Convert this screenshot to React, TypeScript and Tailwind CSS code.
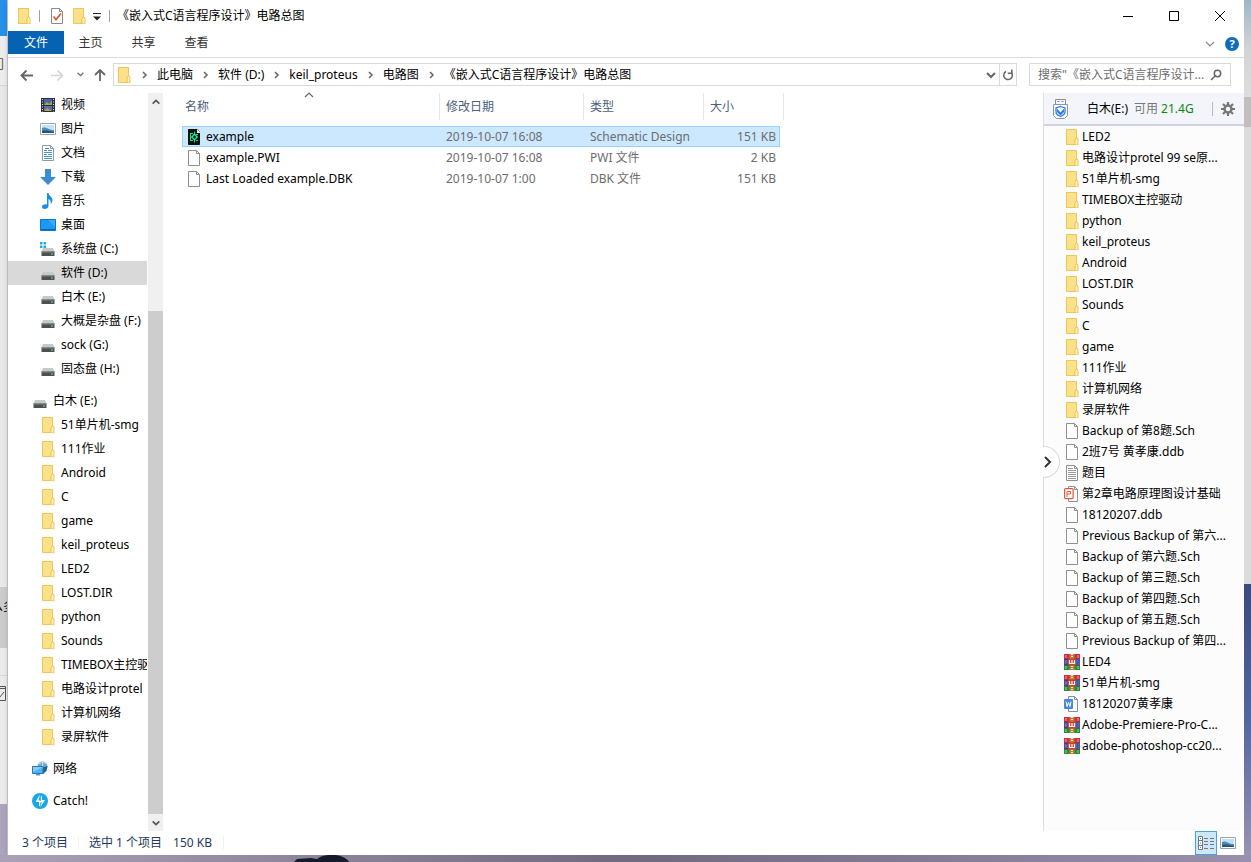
import type { ReactNode } from "react";

type IconName =
  | "folder"
  | "file"
  | "text"
  | "ppt"
  | "word"
  | "rar"
  | "schematic"
  | "video"
  | "picture"
  | "document"
  | "download"
  | "music"
  | "desktop"
  | "system"
  | "drive"
  | "network"
  | "catch";

type Item = { name: string; icon: IconName; selected?: boolean };

const quickItems: Item[] = [
  { name: "视频", icon: "video" },
  { name: "图片", icon: "picture" },
  { name: "文档", icon: "document" },
  { name: "下载", icon: "download" },
  { name: "音乐", icon: "music" },
  { name: "桌面", icon: "desktop" },
  { name: "系统盘 (C:)", icon: "system" },
  { name: "软件 (D:)", icon: "drive", selected: true },
  { name: "白木 (E:)", icon: "drive" },
  { name: "大概是杂盘 (F:)", icon: "drive" },
  { name: "sock (G:)", icon: "drive" },
  { name: "固态盘 (H:)", icon: "drive" },
];

const usbFolders = [
  "51单片机-smg",
  "111作业",
  "Android",
  "C",
  "game",
  "keil_proteus",
  "LED2",
  "LOST.DIR",
  "python",
  "Sounds",
  "TIMEBOX主控驱动",
  "电路设计protel",
  "计算机网络",
  "录屏软件",
];

const crumbs = ["此电脑", "软件 (D:)", "keil_proteus", "电路图", "《嵌入式C语言程序设计》电路总图"];

const files = [
  { name: "example", date: "2019-10-07 16:08", type: "Schematic Design", size: "151 KB", icon: "schematic" as IconName, selected: true },
  { name: "example.PWI", date: "2019-10-07 16:08", type: "PWI 文件", size: "2 KB", icon: "file" as IconName, selected: false },
  { name: "Last Loaded example.DBK", date: "2019-10-07 1:00", type: "DBK 文件", size: "151 KB", icon: "file" as IconName, selected: false },
];

const usbItems: Item[] = [
  { name: "LED2", icon: "folder" },
  { name: "电路设计protel 99 se原...", icon: "folder" },
  { name: "51单片机-smg", icon: "folder" },
  { name: "TIMEBOX主控驱动", icon: "folder" },
  { name: "python", icon: "folder" },
  { name: "keil_proteus", icon: "folder" },
  { name: "Android", icon: "folder" },
  { name: "LOST.DIR", icon: "folder" },
  { name: "Sounds", icon: "folder" },
  { name: "C", icon: "folder" },
  { name: "game", icon: "folder" },
  { name: "111作业", icon: "folder" },
  { name: "计算机网络", icon: "folder" },
  { name: "录屏软件", icon: "folder" },
  { name: "Backup of 第8题.Sch", icon: "file" },
  { name: "2班7号 黄孝康.ddb", icon: "file" },
  { name: "题目", icon: "text" },
  { name: "第2章电路原理图设计基础", icon: "ppt" },
  { name: "18120207.ddb", icon: "file" },
  { name: "Previous Backup of 第六...", icon: "file" },
  { name: "Backup of 第六题.Sch", icon: "file" },
  { name: "Backup of 第三题.Sch", icon: "file" },
  { name: "Backup of 第四题.Sch", icon: "file" },
  { name: "Backup of 第五题.Sch", icon: "file" },
  { name: "Previous Backup of 第四...", icon: "file" },
  { name: "LED4", icon: "rar" },
  { name: "51单片机-smg", icon: "rar" },
  { name: "18120207黄孝康", icon: "word" },
  { name: "Adobe-Premiere-Pro-C...", icon: "rar" },
  { name: "adobe-photoshop-cc20...", icon: "rar" },
];

const page = (
  <>
    <path d="M2.500.5h8l3 3v12h-11z" fill="#fdfdfd" stroke="#8f8f8f" />
    <path d="M10.500.5v3h3" fill="none" stroke="#8f8f8f" />
  </>
);

const driveBody = (
  <>
    <path d="M3 7h10l1.500 4h-13z" fill="#c3cac8" />
    <path d="M1.500 10.500h13V15h-13z" fill="#4b5250" />
    <path d="M1.500 10.500h13v1h-13z" fill="#7d8785" />
    <path d="M11 12.500h2v1h-2z" fill="#5ee08a" />
  </>
);

const art: Record<IconName, ReactNode> = {
  folder: (
    <>
      <path d="M2 0h11v9l1 1v6H2z" fill="#fce08a" />
      <path d="M2.500.5h10v15h-10z" fill="none" stroke="#ebc858" />
      <path d="M11 16V11l1-2h1l1 1v6z" fill="#fff0b4" stroke="#e3b93f" strokeWidth=".8" />
    </>
  ),
  file: page,
  text: (
    <>
      {page}
      <path d="M4 3.500h5M4 5.500h8M4 7.500h8M4 9.500h8M4 11.500h8M4 13.500h8" stroke="#9a9a9a" />
    </>
  ),
  ppt: (
    <>
      <path d="M4.500.5h6l3 3v12h-9z" fill="#fff" stroke="#9a8f8d" />
      <path d="M10.500.5v3h3" fill="none" stroke="#9a8f8d" />
      <rect x=".6" y="2.600" width="8.500" height="10" rx="1" fill="#fff" stroke="#e2573b" strokeWidth="1.200" />
      <path d="M3 11V5.500h3.500v2.500H3" fill="none" stroke="#e2573b" />
    </>
  ),
  word: (
    <>
      <path d="M4.500.5h6l3 3v12h-9z" fill="#fff" stroke="#7f8fae" />
      <path d="M10.500.5v3h3" fill="none" stroke="#7f8fae" />
      <rect x="0" y="3" width="9" height="10" rx="1" fill="#4a86dc" />
      <path d="M2 5.500l1 5 1.500-4 1.500 4 1-5" fill="none" stroke="#fff" />
    </>
  ),
  rar: (
    <>
      <path d="M0 0h16v5H0z" fill="#d22b50" />
      <path d="M0 5.500h16v5H0z" fill="#3f5fc0" />
      <path d="M0 5.500h5v5H0z" fill="#6a3f9c" />
      <path d="M0 11h16v5H0z" fill="#1e8f45" />
      <path d="M0 5.250h16M0 10.750h16" stroke="#2a1c3c" strokeWidth=".8" />
      <path d="M2 1v3M2 12v3M14 1v3M14 12v3" stroke="#f0d070" strokeWidth=".8" />
      <path d="M2 6.500v3" stroke="#b39ddb" strokeWidth=".8" />
      <path d="M5.500 0h5v16h-5z" fill="#b58238" />
      <path d="M4 4.500h8v7H4z" fill="#c8432e" />
      <path d="M5.500 6v3.500h5V6M8 6v3.500" fill="none" stroke="#fff" strokeWidth="1.200" />
      <path d="M8 0v4M8 12v4" stroke="#f7e3a0" strokeDasharray="1 1" strokeWidth="2" />
    </>
  ),
  schematic: (
    <>
      <path d="M2.500.5h9l2 2v13h-11z" fill="#03150f" stroke="#111" />
      <path d="M11 0l3 3v1h-3z" fill="#e8f4ea" />
      <path d="M8.500 5l2.500 3-2.500 3L6 8z" fill="none" stroke="#1fe8b0" strokeWidth="1.300" />
      <path d="M4 4.500h3M4 8h2M4 11.500h3M4.500 4.500v7M10 5.500h2M11 8h1M10 11.500h2M8.500 2.500V5M8.500 11v2.500" stroke="#23d973" />
    </>
  ),
  video: (
    <>
      <path d="M1 1h14v14H1z" fill="#2b2f3b" />
      <path d="M4 2h8v6H4z" fill="#4968a8" />
      <path d="M4 9h8v5H4z" fill="#596fae" />
      <path d="M4 8l3-3 2 2 3-3v4zM4 14l3-3 5 3z" fill="#b4a33f" />
      <path d="M2.500 2v13M13.500 2v13" stroke="#e8e8e8" strokeDasharray="1 1.500" />
    </>
  ),
  picture: (
    <>
      <path d="M.5 2.500h15v11H.5z" fill="#fff" stroke="#9aa4ad" />
      <path d="M2 4h12v8H2z" fill="#c3e1f5" />
      <path d="M2 7c4-2 6 2 12 2v3H2z" fill="#4c8abf" />
      <path d="M2 10c4-1 7 0 12 1v1H2z" fill="#2c526f" />
    </>
  ),
  document: (
    <>
      <path d="M2.500.5h8l3 3v12h-11z" fill="#fff" stroke="#8b9aa6" />
      <path d="M10.500.5v3h3" fill="none" stroke="#8b9aa6" />
      <path d="M4 5.500h3M8 5.500h4M4 7.500h8M4 9.500h3M8 9.500h4M4 11.500h8M4 13.500h8M5 3.500h4" stroke="#4f8fc0" />
    </>
  ),
  download: <path d="M5 0h6v8h5l-8 8-8-8h5z" fill="#3d8bd3" />,
  music: (
    <path
      d="M7 0h1.500c.5 3 4 4 4 7 0 2-1 3-2 4 .8-3-.3-4-2-5v7c0 2-2 3-4 3-1.500 0-2.500-.8-2.500-2 0-2 2-3 5-2.500z"
      fill="#1b8ce3"
    />
  ),
  desktop: (
    <>
      <path d="M.5 2.500h15v11H.5z" fill="#1b9af5" stroke="#1373c6" />
      <path d="M1 12h14v1H1z" fill="#0f65ad" />
      <path d="M8 3h7v7z" fill="#35aaff" />
    </>
  ),
  system: (
    <>
      {driveBody}
      <path d="M0 1h2.500v2.500H0zM3.500 1H6v2.500H3.500zM0 4.500h2.500V7H0zM3.500 4.500H6V7H3.500z" fill="#22a7e8" />
    </>
  ),
  drive: driveBody,
  network: (
    <>
      <circle cx="10.500" cy="5.500" r="5" fill="#6fabd2" />
      <path d="M7 3c2-2 5-2 7 0M6 6h9M10.500.5v6" stroke="#c8e4f5" fill="none" />
      <path d="M11 6l4.500-1-1 5-3.500 3z" fill="#24608f" />
      <path d="M.5 5.500h10.500v7H.5z" fill="#4db2ef" stroke="#2777b5" />
      <path d="M1 6h10L1 11z" fill="#86cdf7" />
      <path d="M4 13h4v1.500H4z" fill="#5a9bc8" />
    </>
  ),
  catch: (
    <>
      <circle cx="8" cy="8" r="8" fill="#18a8e4" />
      <path d="M8 1.500L3.500 9H7v4.500l1.200-1.500V7.500H6.500zM8.800 3.500v4.500h-.6v1.500h1.600L8 14.500l5-7.500H9.800V2.500z" fill="#fff" />
    </>
  ),
};

function Icon({ name }: { name: IconName }) {
  return (
    <svg className="size-4 shrink-0" viewBox="0 0 16 16" aria-hidden="true">
      {art[name]}
    </svg>
  );
}

function Chevron({ className, d = "M4 2l4 4-4 4", width = 1.5 }: { className: string; d?: string; width?: number }) {
  return (
    <svg className={className} viewBox="0 0 12 12" fill="none" stroke="currentColor" strokeWidth={width} aria-hidden="true">
      <path d={d} />
    </svg>
  );
}

function NavRow({ item, top = false }: { item: Item; top?: boolean }) {
  return (
    <a
      href="#"
      className={`flex h-6 items-center gap-[5px] overflow-hidden whitespace-nowrap ${top ? "pl-6" : "pl-8"} ${
        item.selected ? "bg-[#d9d9d9]" : ""
      }`}
    >
      <Icon name={item.icon} />
      <span>{item.name}</span>
    </a>
  );
}

function TitleBar() {
  return (
    <header className="flex h-[31px] items-center pr-px pl-2">
      <Icon name="folder" />
      <span className="ml-[7px] h-3 w-px bg-[#a0a0a0]" />
      <button aria-label="属性" className="ml-[9px]">
        <svg className="size-4" viewBox="0 0 16 16" fill="none">
          <path d="M2.500.5h8l3 3v12h-11z" fill="#fff" stroke="#8a8a8a" />
          <path d="M10.500.5v3h3" stroke="#8a8a8a" />
          <path d="M4.500 8.500l2.500 3 5-6" stroke="#dc5b3c" strokeWidth="1.800" />
        </svg>
      </button>
      <button aria-label="新建文件夹" className="ml-[6px]">
        <Icon name="folder" />
      </button>
      <button aria-label="自定义快速访问工具栏" className="ml-1">
        <svg className="size-3" viewBox="0 0 12 12">
          <path d="M2 3h8v1H2zM2 6.500h8L6 10.500z" fill="#222" />
        </svg>
      </button>
      <span className="ml-[6px] h-3 w-px bg-[#a0a0a0]" />
      <h1 className="ml-[7px] flex-1">《嵌入式C语言程序设计》电路总图</h1>
      <button aria-label="最小化" className="flex h-full w-[46px] items-center justify-center">
        <svg className="size-3" viewBox="0 0 12 12" stroke="#000">
          <path d="M1 6.500h10" />
        </svg>
      </button>
      <button aria-label="最大化" className="flex h-full w-[46px] items-center justify-center">
        <svg className="size-3" viewBox="0 0 12 12" stroke="#000" fill="none">
          <path d="M1.500 1.500h9v9h-9z" />
        </svg>
      </button>
      <button aria-label="关闭" className="flex h-full w-[46px] items-center justify-center">
        <svg className="size-3" viewBox="0 0 12 12" stroke="#000">
          <path d="M1 1l10 10M11 1L1 11" />
        </svg>
      </button>
    </header>
  );
}

function Ribbon() {
  return (
    <div className="flex h-[27px] items-start border-b border-[#dadbdc]">
      <button className="h-[23px] w-14 bg-[#0563b1] text-white">文件</button>
      <button className="h-6 w-[53px] text-[#333]">主页</button>
      <button className="h-6 w-[53px] text-[#333]">共享</button>
      <button className="h-6 w-[53px] text-[#333]">查看</button>
      <button aria-label="展开功能区" className="mt-[7px] ml-auto text-[#8a8a8a]">
        <Chevron className="size-3" d="M2 4l4 4 4-4" width={1.2} />
      </button>
      <button aria-label="帮助" className="mt-[6px] mr-[5px] ml-[9px] flex size-[14px] items-center justify-center rounded-full bg-[#0f6cbd] text-[11px] font-bold text-white">
        ?
      </button>
    </div>
  );
}

function AddressRow() {
  return (
    <div className="flex h-[35px] items-start pt-[5px] pr-[13px] pl-[11px]">
      <div className="flex h-[23px] items-center text-[#666]">
        <button aria-label="后退" className="mr-[14px]">
          <svg className="size-4" viewBox="0 0 16 16" fill="none" stroke="currentColor" strokeWidth="1.800">
            <path d="M14 8.500H2.500M7.500 3.500l-5 5 5 5" />
          </svg>
        </button>
        <button aria-label="前进" disabled className="mr-3 text-[#d4d4d4]">
          <svg className="size-4" viewBox="0 0 16 16" fill="none" stroke="currentColor" strokeWidth="1.500">
            <path d="M2 8.500h11.500M8.500 3.500l5 5-5 5" />
          </svg>
        </button>
        <button aria-label="最近浏览的位置" className="mr-2">
          <Chevron className="size-[7px]" d="M1 3l5 5 5-5" width={2} />
        </button>
        <button aria-label="上移" className="mr-[5px]">
          <svg className="size-4" viewBox="0 0 16 16" fill="none" stroke="currentColor" strokeWidth="1.800">
            <path d="M8 14V3M3 8l5-5 5 5" />
          </svg>
        </button>
      </div>
      <nav aria-label="地址" className="flex h-[23px] flex-1 items-center border border-[#d9d9d9] pl-[2px] whitespace-nowrap">
        <Icon name="folder" />
        {crumbs.map((crumb) => (
          <span key={crumb} className="flex items-center">
            <Chevron className="mr-[6px] ml-[7px] size-3 text-[#666]" d="M4 3l3 3-3 3" />
            <a href="#">{crumb}</a>
          </span>
        ))}
        <button aria-label="历史记录" className="ml-auto px-[2px] text-[#666]">
          <Chevron className="size-3" d="M2 4l4 4 4-4" width={2} />
        </button>
        <button aria-label="刷新" className="flex h-full w-[17px] items-center justify-center border-l border-[#d9d9d9] text-[#666]">
          <svg className="size-3" viewBox="0 0 12 12" fill="none" stroke="currentColor" strokeWidth="1.500">
            <path d="M9.500 3.800A4.300 4.300 0 1 1 4 2.500" />
            <path d="M5.800 4.200H9.800V.5" />
          </svg>
        </button>
      </nav>
      <label className="ml-3 flex h-[23px] w-[202px] items-center border border-[#d9d9d9] pr-2 pl-2">
        <input
          type="text"
          aria-label="搜索"
          placeholder='搜索"《嵌入式C语言程序设计...'
          className="min-w-0 flex-1 outline-none placeholder:text-[#6d6d6d]"
        />
        <svg className="size-3 shrink-0 text-[#666]" viewBox="0 0 12 12" fill="none" stroke="currentColor" strokeWidth="1.500">
          <circle cx="7.500" cy="4.500" r="3.200" />
          <path d="M5 7l-4 4" />
        </svg>
      </label>
    </div>
  );
}

function Sidebar() {
  return (
    <aside className="flex w-[155px] shrink-0">
      <nav aria-label="导航窗格" className="flex w-[139px] flex-col gap-2">
        <div>
          {quickItems.map((item) => (
            <NavRow key={item.name} item={item} />
          ))}
        </div>
        <div>
          <NavRow top item={{ name: "白木 (E:)", icon: "drive" }} />
          {usbFolders.map((name) => (
            <NavRow key={name} item={{ name, icon: "folder" }} />
          ))}
        </div>
        <NavRow top item={{ name: "网络", icon: "network" }} />
        <NavRow top item={{ name: "Catch!", icon: "catch" }} />
      </nav>
      <div className="ml-px flex w-[15px] flex-col bg-[#f0f0f0] text-[#555]">
        <button aria-label="向上滚动" className="flex h-[17px] items-center justify-center">
          <Chevron className="size-[10px]" d="M2 8l4-4 4 4" width={2} />
        </button>
        <div className="flex-2" />
        <div className="flex-5 bg-[#cdcdcd]" />
        <button aria-label="向下滚动" className="flex h-[17px] items-center justify-center">
          <Chevron className="size-[10px]" d="M2 4l4 4 4-4" width={2} />
        </button>
      </div>
    </aside>
  );
}

function HeaderCell({ className, children }: { className: string; children: ReactNode }) {
  return (
    <th scope="col" className="h-[33px] p-0 text-left align-top font-normal text-[#4c607a]">
      <div className={`flex h-[27px] items-center border-[#e3e6ea] ${className}`}>{children}</div>
    </th>
  );
}

function FileList() {
  return (
    <main className="relative min-w-0 flex-1 pl-[19px]">
      {/* sort marker over the name column */}
      <Chevron className="absolute top-[-4px] left-[140px] size-3 text-[#666]" d="M2 8l4-4 4 4" width={1.2} />
      <table className="w-[602px] table-fixed border-separate border-spacing-0">
        <colgroup>
          <col className="w-[258px]" />
          <col className="w-[144px]" />
          <col className="w-[120px]" />
          <col className="w-[76px]" />
          <col className="w-1" />
        </colgroup>
        <thead>
          <tr>
            <HeaderCell className="border-r pl-[3px]">名称</HeaderCell>
            <HeaderCell className="border-r pl-[6px]">修改日期</HeaderCell>
            <HeaderCell className="border-r pl-[6px]">类型</HeaderCell>
            <HeaderCell className="pl-[6px]">大小</HeaderCell>
            <td className="p-0 align-top">
              <div className="h-[27px] border-r border-[#e3e6ea]" />
            </td>
          </tr>
        </thead>
        <tbody className="text-[#6d6d6d]">
          {files.map((file) => {
            const cell = file.selected ? "border-[#99d1ff] bg-[#cce8ff]" : "border-transparent";
            return (
              <tr key={file.name}>
                <td className={`h-[21px] border-y border-l p-0 text-black ${cell}`}>
                  <div className="flex items-center gap-1 pl-[3px]">
                    <Icon name={file.icon} />
                    {file.name}
                  </div>
                </td>
                <td className={`h-[21px] border-y p-0 pl-[6px] ${cell}`}>{file.date}</td>
                <td className={`h-[21px] border-y p-0 pl-[6px] ${cell}`}>{file.type}</td>
                <td className={`h-[21px] border-y border-r p-0 pr-[3px] text-right ${cell}`}>{file.size}</td>
              </tr>
            );
          })}
        </tbody>
      </table>
    </main>
  );
}

function UsbPanel() {
  return (
    <aside className="relative w-[201px] shrink-0 border-l border-[#dcdde6] bg-[#fcfcfd]">
      <div className="flex h-[33px] items-center border-b-2 border-[#cdd3e2] bg-[#f3f5fa] pr-[9px] pl-2">
        <svg className="mr-[17px] h-[22px] w-[18px]" viewBox="0 0 18 22" fill="none">
          <path d="M3.500 6V1.500h10V6" stroke="#8c8c8c" />
          <path d="M5.500 3.500h2M9.500 3.500h2" stroke="#8c8c8c" />
          <path d="M1.500 6.500h14v11l-3 3h-8l-3-3z" fill="#fff" stroke="#8795b5" />
          <path d="M8.500 8.500l4.500 1.500v4c0 2-2 3.500-4.500 4.500C6 17.500 4 16 4 14v-4z" fill="#fff" stroke="#2d78e8" strokeWidth="1.300" />
          <path d="M5 10.500l3.500 4 3.500-4v3.500l-3.500 3.500L5 14z" fill="#2d78e8" />
        </svg>
        <span>白木(E:)</span>
        <span className="ml-[6px] text-[#777]">可用</span>
        <span className="ml-[3px] text-[#0c870c]">21.4G</span>
        <span className="ml-auto h-[14px] w-px bg-[#b6bac4]" />
        <button aria-label="设置" className="ml-2">
          <svg className="size-[14px]" viewBox="0 0 14 14" fill="none" stroke="#777">
            <circle cx="7" cy="7" r="3.500" strokeWidth="2.500" />
            <path d="M7 0v3M7 11v3M0 7h3M11 7h3M2 2l2 2M10 10l2 2M12 2l-2 2M4 10l-2 2" strokeWidth="2.200" />
          </svg>
        </button>
      </div>
      <ul>
        {usbItems.map((item) => (
          <li key={item.name + item.icon} className="flex h-[21px] items-center gap-[2px] pl-5 whitespace-nowrap">
            <Icon name={item.icon} />
            <a href="#">{item.name}</a>
          </li>
        ))}
      </ul>
      {/* collapse handle sits on the panel edge */}
      <button
        aria-label="收起"
        className="absolute top-1/2 left-[-1px] flex h-8 w-[17px] -translate-y-1/2 items-center rounded-r-full border border-l-0 border-[#d8d8dc] bg-white text-[#333]"
      >
        <Chevron className="size-3" d="M2 1l5 5-5 5" width={2} />
      </button>
    </aside>
  );
}

function StatusBar() {
  return (
    <footer className="flex h-6 items-center pl-[14px] text-[#1e395b]">
      <span>3 个项目</span>
      <span className="mx-[10px] h-3 w-px bg-[#f0f0f0]" />
      <span>选中 1 个项目</span>
      <span className="ml-[11px]">150 KB</span>
      <span className="ml-[11px] h-3 w-px bg-[#f0f0f0]" />
      <button aria-label="详细信息" className="ml-auto flex h-6 w-[22px] items-center justify-center border border-[#4ba3d9] bg-[#cce8f6]">
        <svg className="size-4" viewBox="0 0 16 16" fill="none" stroke="#71777b">
          <path d="M.5 1.500h4v13h-4zM.5 5.500h4M.5 10.500h4" fill="#fff" />
          <path d="M6 3.500h4M12 3.500h4M6 6.500h4M12 6.500h4M6 9.500h4M12 9.500h4M6 13.500h4M12 13.500h4" />
          <path d="M2 3.500h1M2 8h1M2 12.500h1" stroke="#3e8ec4" />
        </svg>
      </button>
      <button aria-label="大缩略图" className="mr-2 ml-[3px]">
        <Icon name="picture" />
      </button>
    </footer>
  );
}

function LeftBackdrop() {
  return (
    <div className="flex w-[7px] shrink-0 flex-col overflow-hidden whitespace-nowrap text-[#555]">
      <div className="h-9 bg-[#2590e6]" />
      <div className="flex h-[50px] items-center border-b border-[#d5d5d5] bg-[#ececec] pt-2">
        <span className="-ml-2">门</span>
      </div>
      <div className="h-[501px] bg-[#e9e9e9]" />
      <div className="flex h-[61px] items-start bg-[#cbcbcb] pt-3 text-black">
        <span className="-ml-[9px]">么多</span>
      </div>
      <div className="flex h-[156px] flex-col bg-[#ebebeb]">
        <div className="h-7 border-b border-[#d8d8d8]" />
        <svg className="mt-[9px] h-[18px] w-[7px]" viewBox="0 0 7 18" fill="none" stroke="#555">
          <path d="M0 1.500h5.500v14H0M0 3.500h5M0 12l4-5" />
        </svg>
      </div>
    </div>
  );
}

function RightBackdrop() {
  return (
    <div className="flex w-[7px] shrink-0 flex-col">
      <div className="h-[97px] bg-linear-to-b from-[#9fb6c6] via-[#d3d3d6] to-[#dedede]" />
      <div className="h-[30px] bg-[#c3bebe]" />
      <div className="h-[457px] bg-[#dcdcdc]" />
      <div className="flex-1 bg-linear-to-b from-[#3c4a7c] via-[#5465a0] to-[#9a92b0]" />
    </div>
  );
}

export default function App() {
  return (
    <div className="flex min-h-screen flex-col bg-[#aea3bd] font-['Noto_Sans','Noto_Sans_CJK_SC',sans-serif] text-[12px] leading-4 text-black">
      <div className="flex flex-1">
        <LeftBackdrop />
        <div className="flex min-w-0 flex-1 flex-col border-l border-[#b9bcc4] bg-white shadow-md">
          <TitleBar />
          <Ribbon />
          <AddressRow />
          <div className="flex flex-1">
            <Sidebar />
            <FileList />
            <UsbPanel />
          </div>
          <StatusBar />
        </div>
        <RightBackdrop />
      </div>
      <div className="flex h-[7px] bg-linear-to-r from-[#aaa0b8] via-[#70697f] to-[#9890ac]">
        <svg className="ml-[294px] h-[7px] w-14" viewBox="0 0 56 7">
          <path d="M0 7l3-3 14-1 6 1C30-2 50-2 55 7z" fill="#141c2c" />
        </svg>
      </div>
    </div>
  );
}
